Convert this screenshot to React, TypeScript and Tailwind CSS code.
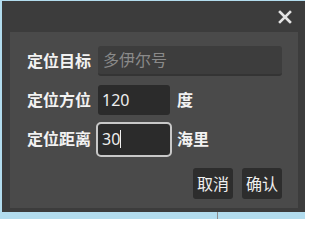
const FONT = "font-['Noto_Sans','Noto_Sans_CJK_SC',sans-serif]";

function Field({
  label,
  children,
}: {
  label: string;
  children: React.ReactNode;
}) {
  return (
    <div className="flex items-center h-[30px]">
      <span className="w-[71px] shrink-0 text-[16px] font-semibold text-[#f2f2f2] leading-none">
        {label}
      </span>
      {children}
    </div>
  );
}

export default function App() {
  return (
    <div className={`relative w-[305px] h-[219px] overflow-hidden bg-[#b2dcee] ${FONT}`}>
      {/* map bits peeking behind the dialog */}
      <div className="absolute left-[217px] bottom-0 w-px h-[8px] bg-[#8c8c8c]" />
      <div className="absolute left-[2px] top-[1px] w-[310px] h-[211px] bg-[#3c3c3c] flex flex-col">
        <div className="h-[31px] flex justify-end items-start pt-[9px] pr-[20px]">
          <svg width="14" height="14" viewBox="0 0 14 14" className="text-[#e4e4e4]">
            <path d="M2 2 L12 12 M12 2 L2 12" stroke="currentColor" strokeWidth="2.6" strokeLinecap="square" />
          </svg>
        </div>
        <div className="ml-[8px] w-[288px] h-[176px] bg-[#4a4a4a] pt-[14px] pl-[17px] pr-[16px] flex flex-col gap-[9px]">
          <Field label="定位目标">
            <div className="w-[184px] h-[30px] rounded-[3px] bg-[#3d3d3d] border-b-2 border-[#343434] flex items-center pl-[5px] text-[16px] text-[#8a8a8a]">
              多伊尔号
            </div>
          </Field>
          <Field label="定位方位">
            <div className="w-[72px] h-[30px] rounded-[3px] bg-[#2b2b2b] flex items-center pl-[4px] text-[16px] text-[#eeeeee]">
              120
            </div>
            <span className="ml-[7px] text-[16px] font-semibold text-[#f2f2f2]">度</span>
          </Field>
          <Field label="定位距离">
            <div className="w-[72px] h-[31px] rounded-[3px] bg-[#2b2b2b] outline-2 outline-[#c8c8c8] outline-offset-0 flex items-center pl-[4px] text-[16px] text-[#eeeeee]">
              30
              <span className="w-px h-[18px] bg-[#f0f0f0]" />
            </div>
            <span className="ml-[7px] text-[16px] font-semibold text-[#f2f2f2]">海里</span>
          </Field>
          <div className="flex justify-end gap-[9px] mt-[5px]">
            <button className="w-[40px] h-[31px] rounded-[3px] bg-[#2d2d2d] text-[16px] text-[#f0f0f0]">
              取消
            </button>
            <button className="w-[40px] h-[31px] rounded-[3px] bg-[#2d2d2d] text-[16px] text-[#f0f0f0]">
              确认
            </button>
          </div>
        </div>
      </div>
    </div>
  );
}
